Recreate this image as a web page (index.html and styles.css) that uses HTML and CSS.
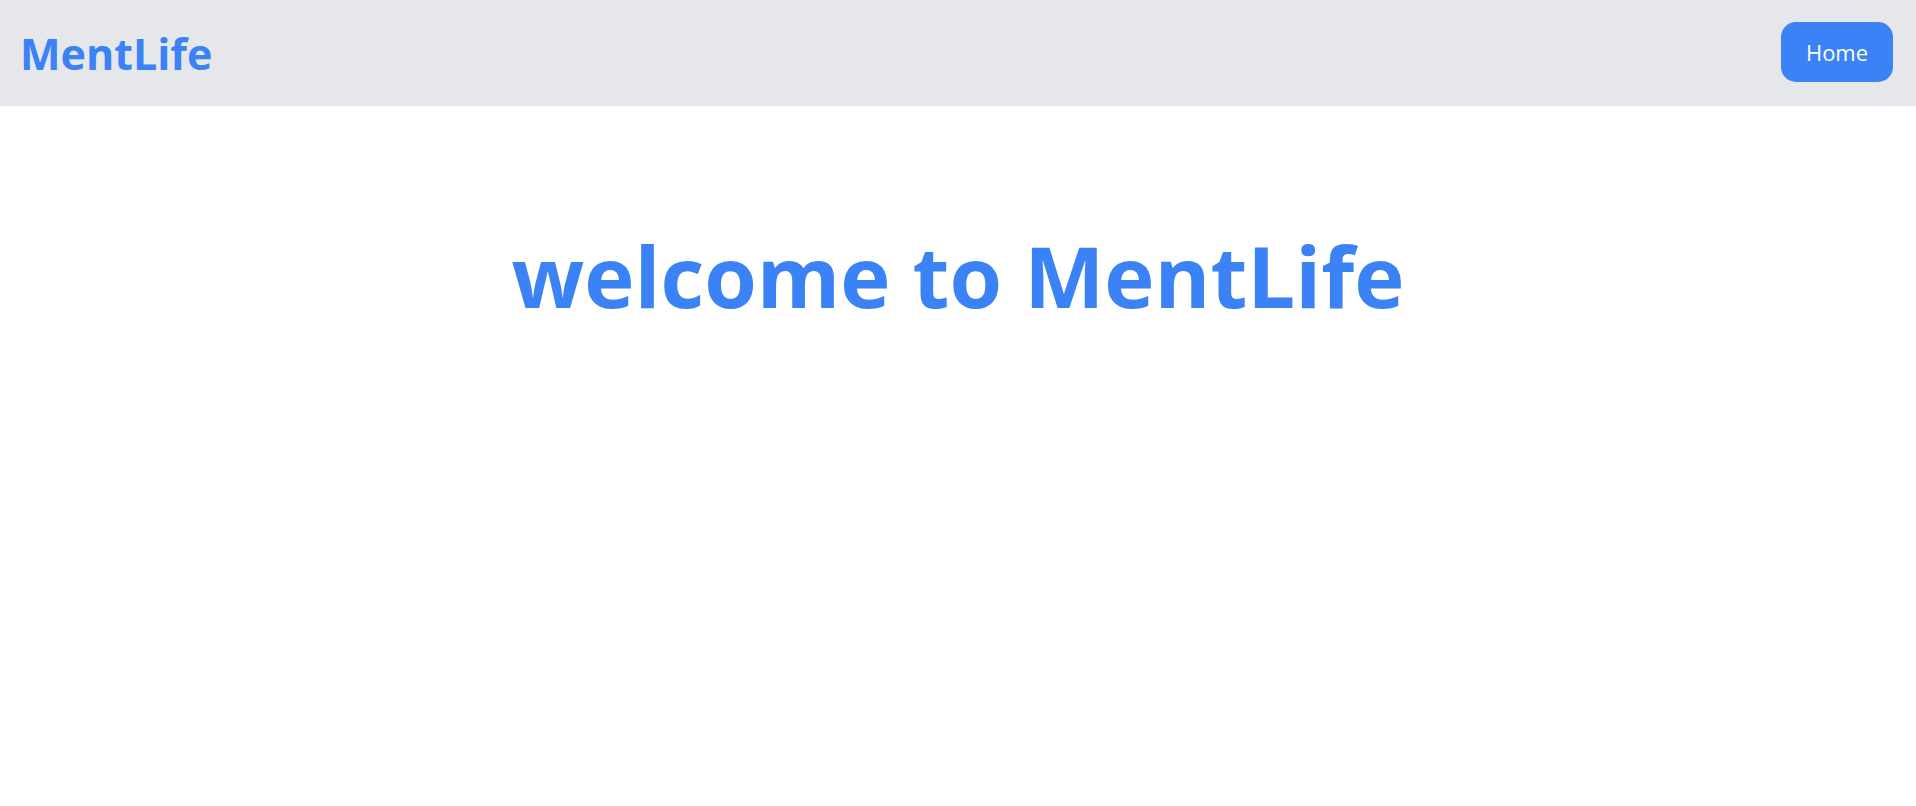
FILE: index.html
```html
<!DOCTYPE html>
<html lang="en">
<head>
<meta charset="utf-8">
<title>MentLife</title>
<link rel="stylesheet" href="styles.css">
</head>
<body>
<header class="navbar">
  <div class="brand">MentLife</div>
  <a class="nav-btn" href="#">Home</a>
</header>
<main class="hero">
  <h1 class="hero-title">welcome to MentLife</h1>
</main>
</body>
</html>
```
FILE: styles.css
```css
* { box-sizing: border-box; }
html, body { margin: 0; padding: 0; background: #ffffff; }
body { font-family: "Open Sans", "Noto Sans", sans-serif; }

.navbar {
  height: 106px;
  background: #e5e7eb;
  display: flex;
  justify-content: space-between;
  align-items: flex-start;
  padding: 0 23px 0 20px;
}

.brand {
  margin-top: 32px;
  font-size: 43px;
  line-height: 43px;
  font-weight: 700;
  color: #3b82f6;
}

.nav-btn {
  margin-top: 22px;
  width: 112px;
  height: 60px;
  display: flex;
  align-items: center;
  justify-content: center;
  background: #3b82f6;
  color: #ffffff;
  font-size: 22px;
  text-decoration: none;
  border-radius: 15px;
}

.hero {
  display: flex;
  justify-content: center;
  padding-top: 127px;
}

.hero-title {
  margin: 0;
  font-size: 85px;
  line-height: 85px;
  font-weight: 700;
  color: #3b82f6;
  white-space: nowrap;
}
```
